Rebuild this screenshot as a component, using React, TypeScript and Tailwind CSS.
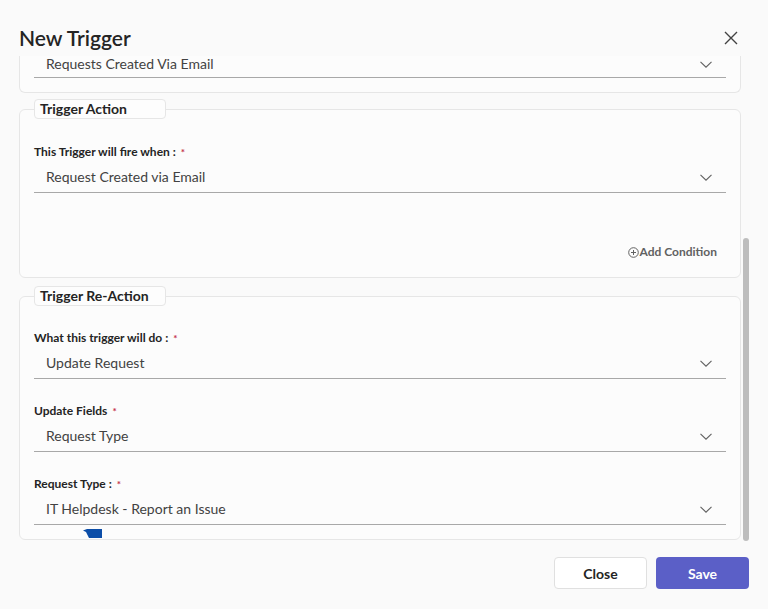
import React from 'react'

// Fluent-like "New Trigger" dialog: stacked fieldset cards with underline selects

const FONT = { fontFamily: 'Lato, "Liberation Sans", sans-serif' }

const Chevron = () => (
  <div className="flex h-4 items-center">
    <svg width="12" height="7" viewBox="0 0 12 7" fill="none">
      <path d="M0.5 0.8 6 6.2 11.5 0.8" stroke="#616161" strokeWidth="1.1" />
    </svg>
  </div>
)

const Required = () => <span className="ml-[5px] text-[10px] text-[#c4314b] align-top">*</span>

function SelectField({ value, compact = false }: { value: string; compact?: boolean }) {
  return (
    <div
      className={`flex justify-between border-b border-[#a8a8a8] pl-[12px] pr-[14px] ${
        compact ? 'h-[22px] items-start' : 'h-[31px] items-center'
      }`}
    >
      <span className="text-[14px] leading-4 text-[#424242]">{value}</span>
      <Chevron />
    </div>
  )
}

function Field({ label, value, colon = true }: { label: string; value: string; colon?: boolean }) {
  return (
    <div className="flex flex-col gap-[2px]">
      <label className="h-4 text-[12px] font-bold leading-4 text-[#242424]">
        {label}
        {colon ? ' :' : ''}
        <Required />
      </label>
      <SelectField value={value} />
    </div>
  )
}

function Card({ legend, children }: { legend: string; children: React.ReactNode }) {
  return (
    <fieldset className="relative rounded-md border border-[#e6e6e6] bg-[#fcfcfc] px-[14px]">
      <legend className="h-[20px] w-[132px] rounded-[4px] border border-[#e6e6e6] bg-[#fdfdfd] pl-[5px] text-[14px] font-bold leading-[18px] text-[#242424]">
        {legend}
      </legend>
      {children}
    </fieldset>
  )
}

export default function App() {
  return (
    <div style={FONT} className="flex h-[609px] w-[768px] flex-col bg-[#fafafa] px-[19px] pb-[20px] pt-[22px]">
      {/* header */}
      <div className="flex h-8 items-center justify-between">
        <h1 className="text-[21px] font-semibold text-[#242424]">New Trigger</h1>
        <button className="mr-[10px] flex h-4 w-4 items-center justify-center">
          <svg width="14" height="14" viewBox="0 0 14 14">
            <path d="M1 1 13 13M13 1 1 13" stroke="#424242" strokeWidth="1.4" />
          </svg>
        </button>
      </div>

      {/* scrolling body, first card already scrolled past its top */}
      <div className="mt-[2px] flex h-[485px] gap-[2px]">
        <div className="flex flex-1 flex-col overflow-hidden">
          <div className="rounded-b-md border-x border-b border-[#e6e6e6] bg-[#fcfcfc] px-[14px] pb-[14px]">
            <SelectField value="Requests Created Via Email" compact />
          </div>

          <div className="mt-[6px]">
            <Card legend="Trigger Action">
              <div className="pt-[25px]">
                <Field label="This Trigger will fire when" value="Request Created via Email" />
              </div>
              <div className="flex justify-end pb-[17px] pr-[9px] pt-[51px]">
                <span className="flex items-center gap-[1px] text-[12px] font-bold leading-4 text-[#616161]">
                  <svg width="11" height="11" viewBox="0 0 11 11" fill="none">
                    <circle cx="5.5" cy="5.5" r="4.8" stroke="#616161" strokeWidth="1" />
                    <path d="M5.5 3v5M3 5.5h5" stroke="#616161" strokeWidth="1" />
                  </svg>
                  Add Condition
                </span>
              </div>
            </Card>
          </div>

          <div className="mt-[8px]">
            <Card legend="Trigger Re-Action">
              <div className="flex flex-col gap-[24px] pb-[14px] pt-[24px]">
                <Field label="What this trigger will do" value="Update Request" />
                <Field label="Update Fields" value="Request Type" colon={false} />
                <Field label="Request Type" value="IT Helpdesk - Report an Issue" />
              </div>
              <svg className="absolute bottom-[1px] left-[63px]" width="19" height="9" viewBox="0 0 19 9">
                <path d="M0 1.5 4 0H19V9H6L3 3Z" fill="#0c4ea8" />
              </svg>
            </Card>
          </div>
        </div>

        {/* scrollbar */}
        <div className="flex w-[6px] flex-col justify-end">
          <div className="h-[303px] rounded-full bg-[#bdbdbd]" />
        </div>
      </div>

      {/* footer */}
      <div className="mt-[16px] flex justify-end gap-[9px]">
        <button className="h-8 w-[93px] rounded-[4px] border border-[#e0e0e0] bg-white text-[14px] font-bold text-[#242424]">
          Close
        </button>
        <button className="h-8 w-[93px] rounded-[4px] bg-[#5b5fc7] text-[14px] font-bold text-white">
          Save
        </button>
      </div>
    </div>
  )
}
